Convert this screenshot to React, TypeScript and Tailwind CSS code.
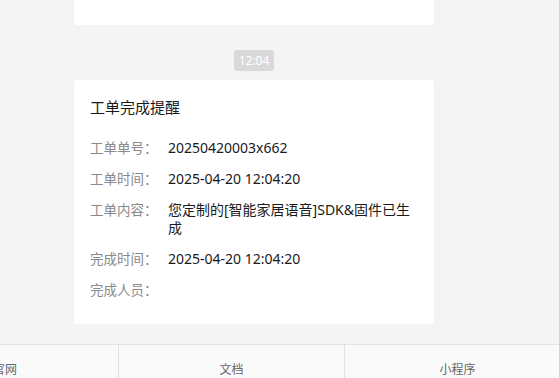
import React from 'react';

const rows: { label: string; value: string }[] = [
  { label: '工单单号：', value: '20250420003x662' },
  { label: '工单时间：', value: '2025-04-20 12:04:20' },
  { label: '工单内容：', value: '您定制的[智能家居语音]SDK&固件已生成' },
  { label: '完成时间：', value: '2025-04-20 12:04:20' },
  { label: '完成人员：', value: '' },
];

const tabs = ['官网', '文档', '小程序'];

export default function App() {
  return (
    <div
      className="relative h-[378px] w-[559px] overflow-hidden bg-[#f4f4f4]"
      style={{ fontFamily: '"Noto Sans", "Noto Sans CJK SC", sans-serif' }}
    >
      <div className="ml-[74px] w-[360px]">
        <div className="h-[25px] rounded-b-[3px] bg-white" />

        <div className="flex justify-center pt-[25px] pb-[9px]">
          <span className="rounded-[3px] bg-[#d9d9d9] px-[5px] text-[12px] leading-[21px] text-white">
            12:04
          </span>
        </div>

        <div className="rounded-[3px] bg-white px-4 pt-[16px] pb-[25px]">
          <div className="text-[15px] leading-[22px] text-[#1a1a1a]">工单完成提醒</div>
          <div className="mt-[21px] flex flex-col gap-[13px]">
            {rows.map((r) => (
              <div key={r.label} className="flex">
                <span className="w-[78px] shrink-0 text-[13.5px] leading-[18px] text-[#8a8a8a]">
                  {r.label}
                </span>
                <span className="w-[250px] text-[14px] leading-[18px] text-[#1a1a1a]">{r.value}</span>
              </div>
            ))}
          </div>
        </div>
      </div>

      <div className="absolute top-[344px] left-[-108px] flex h-[40px] border-t border-[#e2e2e2] bg-[#fafafa]">
        {tabs.map((t, i) => (
          <div
            key={t}
            className={`flex w-[226px] justify-center pt-[17px] text-[12px] leading-[16px] text-[#666] ${
              i > 0 ? 'border-l border-[#e2e2e2]' : ''
            }`}
          >
            {t}
          </div>
        ))}
      </div>
    </div>
  );
}
